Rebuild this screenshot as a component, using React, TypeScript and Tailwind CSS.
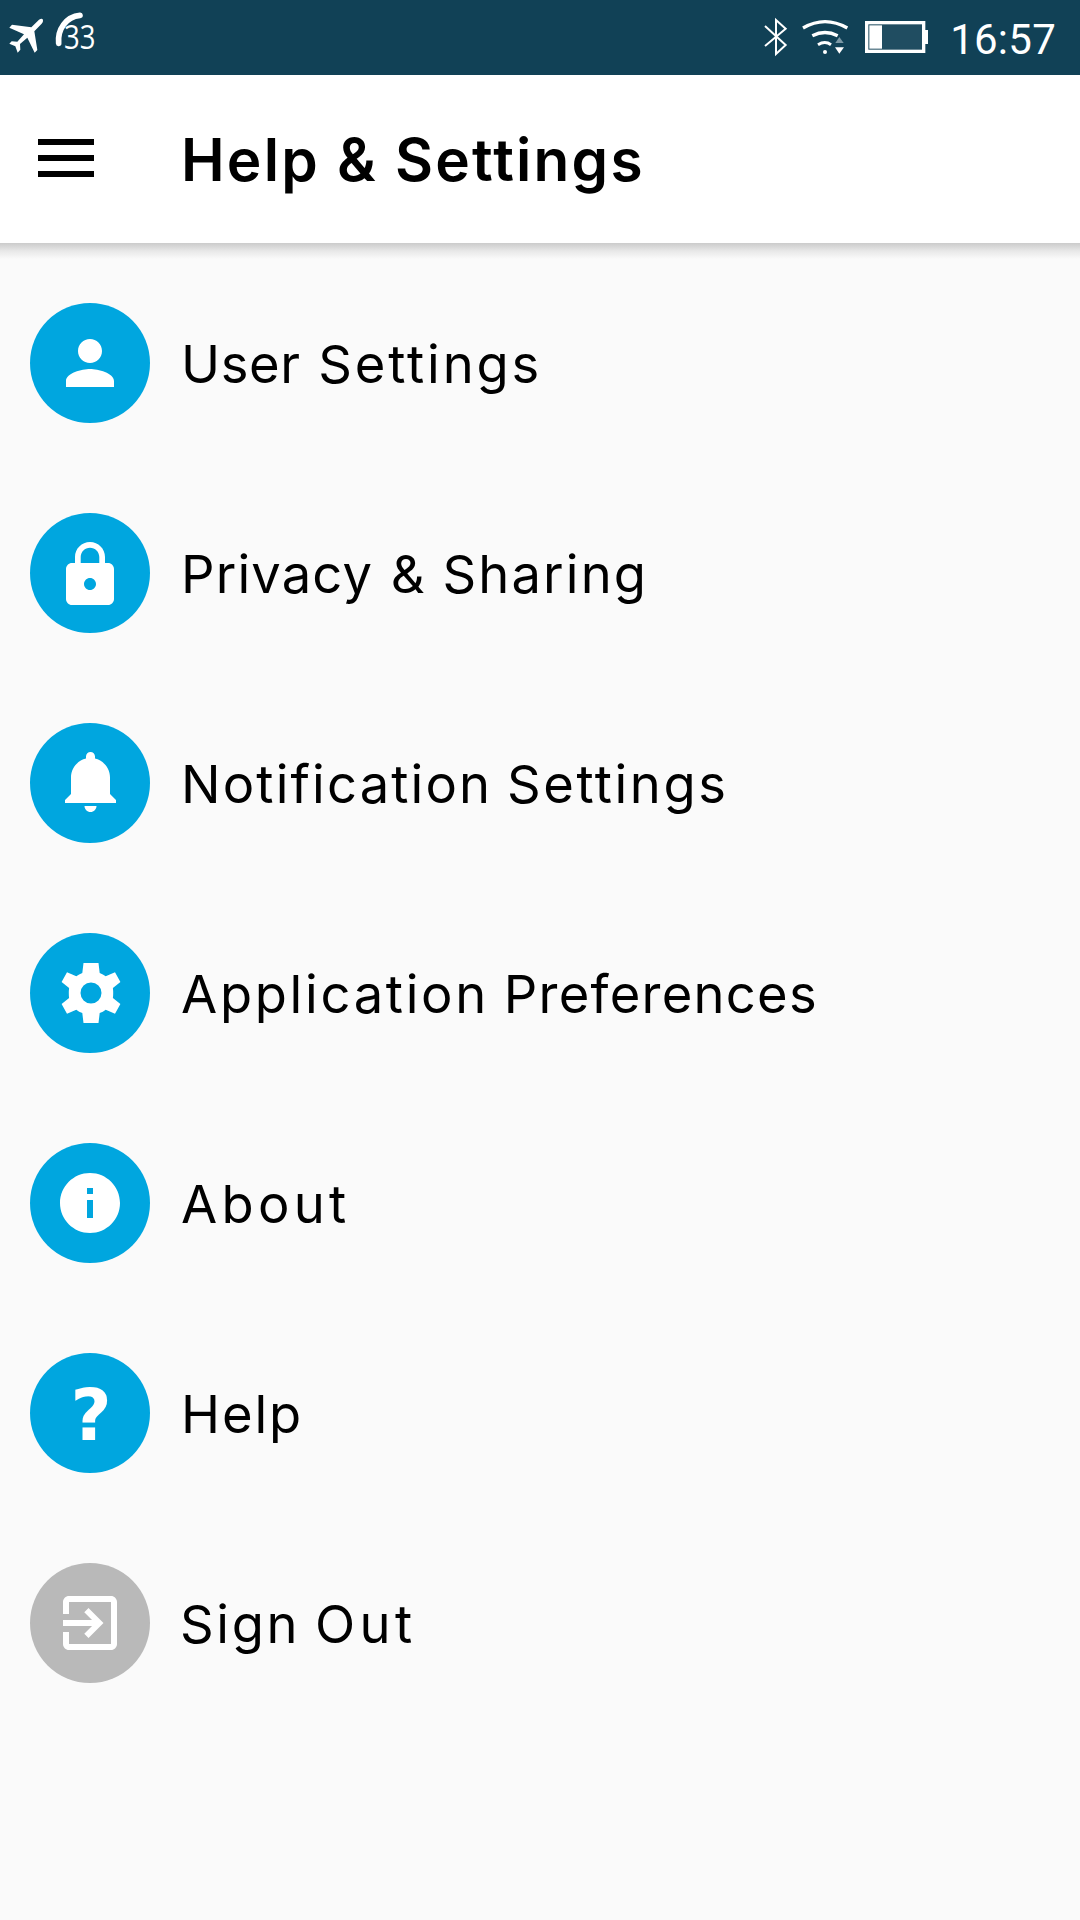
import type { ReactNode } from 'react'

type Item = {
  id: string
  label: ReactNode
  icon: ReactNode
  muted?: boolean
}

function Glyph({ d, className = '' }: { d: string; className?: string }) {
  return (
    <svg viewBox="0 0 24 24" className={`h-[72px] w-[72px] shrink-0 fill-white ${className}`} aria-hidden="true">
      <path d={d} />
    </svg>
  )
}

const items: Item[] = [
  {
    id: 'user',
    label: (
      <span className="[word-spacing:3px]">
        <span className="tracking-[0.6px]">User</span> <span className="tracking-[2.85px]">Settings</span>
      </span>
    ),
    icon: <Glyph d="M12 12c2.21 0 4-1.79 4-4s-1.79-4-4-4-4 1.79-4 4 1.79 4 4 4zm0 2c-2.67 0-8 1.34-8 4v2h16v-2c0-2.66-5.33-4-8-4z" />,
  },
  {
    id: 'privacy',
    label: (
      <span className="[word-spacing:3px]">
        <span className="tracking-[1.15px]">Privacy</span> &amp; <span className="tracking-[2.15px]">Sharing</span>
      </span>
    ),
    icon: (
      <Glyph
        className="mt-[3px]"
        d="M18 8h-1V6c0-2.76-2.24-5-5-5S7 3.24 7 6v2H6c-1.1 0-2 .9-2 2v10c0 1.1.9 2 2 2h12c1.1 0 2-.9 2-2V10c0-1.1-.9-2-2-2zm-6 9c-1.1 0-2-.9-2-2s.9-2 2-2 2 .9 2 2-.9 2-2 2zm3.1-9H8.9V6c0-1.71 1.39-3.1 3.1-3.1 1.71 0 3.1 1.39 3.1 3.1v2z"
      />
    ),
  },
  {
    id: 'notifications',
    label: (
      <span>
        <span className="tracking-[2.15px]">Notification</span> <span className="tracking-[2.55px]">Settings</span>
      </span>
    ),
    icon: (
      <Glyph
        className="-mt-0.5 ml-[3px]"
        d="M11.5 22c1.1 0 2-.9 2-2h-4c0 1.1.9 2 2 2zm6.5-6v-5.5c0-3.07-2.13-5.64-5-6.32V3.5c0-.83-.67-1.5-1.5-1.5S10 2.67 10 3.5v.68c-2.87.68-5 3.25-5 6.32V16l-2 2v1h17v-1l-2-2z"
      />
    ),
  },
  {
    id: 'preferences',
    label: (
      <span>
        <span className="tracking-[2.7px]">Application</span> <span className="tracking-[1.25px]">Preferences</span>
      </span>
    ),
    icon: (
      <Glyph
        className="ml-[2px]"
        d="M9.5 2h5l.4 3.3q1.1.4 2 1.1L20 5.1l1.8 3.2-2.5 2q.2 1.7 0 3.4l2.5 2L20 18.9l-3.1-1.3q-.9.7-2 1.1l-.4 3.3h-5l-.4-3.3q-1.1-.4-2-1.1L4 18.9l-1.8-3.2 2.5-2q-.2-1.7 0-3.4l-2.5-2L4 5.1l3.1 1.3q.9-.7 2-1.1zM12 15.5a3.5 3.5 0 1 0 0-7 3.5 3.5 0 0 0 0 7z"
      />
    ),
  },
  {
    id: 'about',
    label: <span className="tracking-[4.3px]">About</span>,
    icon: <Glyph d="M12 2C6.48 2 2 6.48 2 12s4.48 10 10 10 10-4.48 10-10S17.52 2 12 2zm1 15h-2v-6h2v6zm0-8h-2V7h2v2z" />,
  },
  {
    id: 'help',
    label: <span className="tracking-[1.89px]">Help</span>,
    icon: <span className="pt-1 pl-0.5 font-['DejaVu_Sans',sans-serif] text-[71px] leading-none font-bold text-white">?</span>,
  },
  {
    id: 'sign-out',
    label: (
      <span className="-ml-px">
        <span className="tracking-[2.65px]">Sign</span> <span className="tracking-[4.4px]">Out</span>
      </span>
    ),
    muted: true,
    icon: (
      <Glyph d="M10.09 15.59L11.5 17l5-5-5-5-1.41 1.41L12.67 11H3v2h9.67l-2.58 2.59zM19 3H5c-1.11 0-2 .9-2 2v4h2V5h14v14H5v-4H3v4c0 1.1.89 2 2 2h14c1.1 0 2-.9 2-2V5c0-1.1-.9-2-2-2z" />
    ),
  },
]

function StatusBar() {
  return (
    <div className="flex h-[75px] items-center justify-between bg-[#114156] text-white">
      <div className="relative h-[75px] w-[120px]">
        <svg viewBox="0 0 360 225" className="h-full w-full" aria-hidden="true">
          <path
            fill="white"
            d="M117 59Q127 53 129 60Q130 66 125 71L103 94L112 150L104 158L82 113L60 132L61 149L53 158L46 139L28 131L35 124L52 125L72 103L28 83L36 74L94 82Z"
          />
          <path d="M176 130C172 88 198 50 240 46" fill="none" stroke="white" strokeWidth="17" strokeLinecap="round" />
        </svg>
        <span className="absolute top-[17px] left-[64px] origin-left scale-x-[0.86] font-['Open_Sans',sans-serif] text-[32px] leading-10">33</span>
      </div>

      <div className="flex items-center">
        <svg viewBox="0 0 600 225" className="h-[75px] w-[200px]" fill="none" stroke="white" aria-hidden="true">
          <path d="M45 78L107 135L78 162V60L107 86L45 138" strokeWidth="6" />
          <g strokeWidth="10">
            <path d="M159 84Q225 46 292 84" />
            <path d="M187 107Q225 88 263 107" />
            <path d="M204 134Q225 121 243 134" strokeWidth="9" />
          </g>
          <g stroke="none">
            <circle cx="225" cy="156" r="6" fill="white" />
            <path d="M268 111L281 129H256Z" fill="#7c98a5" />
            <path d="M255 142H282L268 161Z" fill="white" />
            <path d="M525 90H534V132H525Z" fill="white" />
          </g>
          <rect x="350" y="68" width="171" height="86" fill="#204d61" strokeWidth="10" />
          <path d="M358 76H396V146H358Z" fill="white" stroke="none" />
        </svg>
        <span className="mr-6 pt-1 font-['Roboto',sans-serif] text-[42px] leading-none tracking-[0.25px]">16:57</span>
      </div>
    </div>
  )
}

function Header() {
  return (
    <header className="flex h-[168px] items-center bg-white pl-[38px]">
      <button className="flex w-14 flex-col gap-[10px] pb-0.5" aria-label="Open menu">
        <span className="h-[6px] w-full bg-black" />
        <span className="h-[6px] w-full bg-black" />
        <span className="h-[6px] w-full bg-black" />
      </button>
      <h1 className="ml-[87px] pt-[3px] text-[58.5px] leading-none font-semibold tracking-[2.24px]">Help &amp; Settings</h1>
    </header>
  )
}

export default function App() {
  return (
    <div className="flex h-[1920px] w-[1080px] flex-col overflow-hidden bg-[#fafafa] font-['Inter',sans-serif] text-black">
      <StatusBar />
      <Header />
      <div className="h-4 shrink-0 bg-linear-to-b from-[#cbcbcb] via-[#e8e8e8] to-[#fafafa]" />
      <ul className="flex flex-col gap-[90px] pt-11 pl-[30px]">
        {items.map((item) => (
          <li key={item.id} className="flex h-[120px] items-center gap-[31px]">
            <div
              className={`flex h-[120px] w-[120px] shrink-0 items-center justify-center rounded-full ${item.muted ? 'bg-[#b9b9b9]' : 'bg-[#00a6df]'}`}
            >
              {item.icon}
            </div>
            <div className="pt-0.5 text-[52.5px] leading-none whitespace-nowrap">{item.label}</div>
          </li>
        ))}
      </ul>
    </div>
  )
}
